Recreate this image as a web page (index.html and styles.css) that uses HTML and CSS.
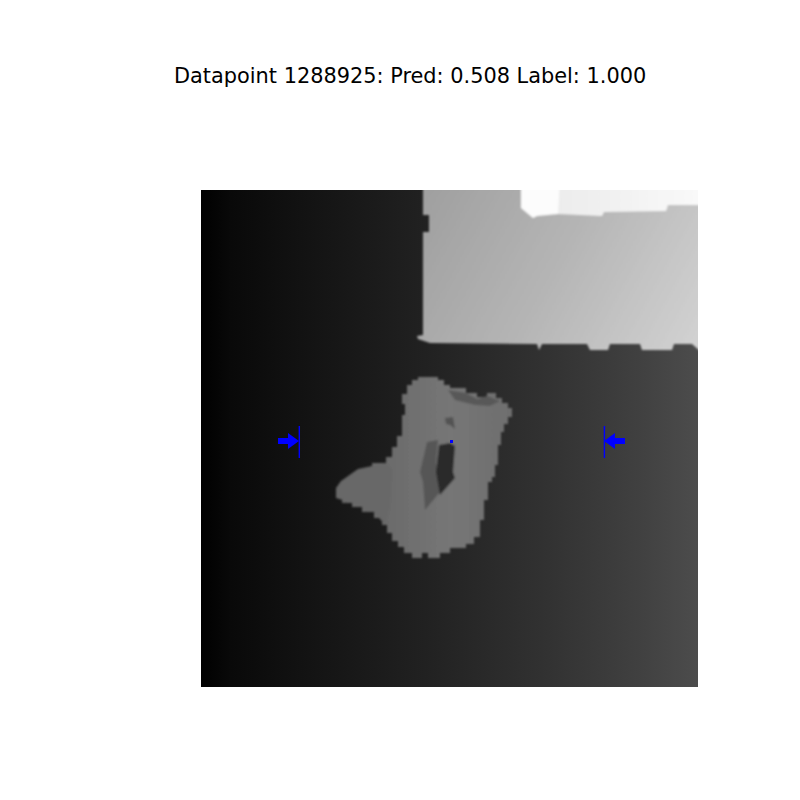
FILE: index.html
```html
<!DOCTYPE html>
<html lang="en">
<head>
<meta charset="utf-8">
<title>Datapoint 1288925</title>
<link rel="stylesheet" href="styles.css">
</head>
<body>
<main class="figure">
  <h1 class="title">Datapoint 1288925: Pred: 0.508 Label: 1.000</h1>
  <svg class="plot" width="497" height="497" viewBox="201 190 497 497" aria-label="Depth image with grasp markers">
    <defs>
      <linearGradient id="floor" gradientUnits="userSpaceOnUse" x1="201" y1="0" x2="697" y2="0">
        <stop offset="0" stop-color="#000"/>
        <stop offset="0.06" stop-color="#090909"/>
        <stop offset="0.2" stop-color="#121212"/>
        <stop offset="0.45" stop-color="#212121"/>
        <stop offset="0.7" stop-color="#323232"/>
        <stop offset="0.88" stop-color="#404040"/>
        <stop offset="1" stop-color="#4c4c4c"/>
      </linearGradient>
      <linearGradient id="panel" gradientUnits="userSpaceOnUse" x1="423" y1="200" x2="697" y2="350">
        <stop offset="0" stop-color="#a0a0a0"/>
        <stop offset="0.5" stop-color="#b6b6b6"/>
        <stop offset="1" stop-color="#d2d2d2"/>
      </linearGradient>
      <linearGradient id="glare" gradientUnits="userSpaceOnUse" x1="558" y1="0" x2="697" y2="0">
        <stop offset="0" stop-color="#ececec"/>
        <stop offset="1" stop-color="#f9f9f9"/>
      </linearGradient>
      <linearGradient id="bootShade" gradientUnits="userSpaceOnUse" x1="335" y1="0" x2="512" y2="0">
        <stop offset="0" stop-color="#646464"/>
        <stop offset="0.4" stop-color="#6e6e6e"/>
        <stop offset="0.65" stop-color="#767676"/>
        <stop offset="1" stop-color="#6e6e6e"/>
      </linearGradient>
      <filter id="soft" x="-5%" y="-5%" width="110%" height="110%">
        <feGaussianBlur stdDeviation="1"/>
      </filter>
      <clipPath id="frame"><rect x="201" y="190" width="497" height="497"/></clipPath>
    </defs>
    <rect class="floor" x="201" y="190" width="497" height="497"/>
    <g clip-path="url(#frame)">
      <g filter="url(#soft)">
        <polygon class="panel" points="423,180 423,215 429,215 429,232 423,232 423,335 417,336 418,339 430,343 537,344 539,350 542,344 587,344 590,350 608,350 610,344 640,344 642,350 672,350 674,344 692,344 700,351 710,351 710,180"/>
        <polygon class="glare" points="556,180 558,214 602,216 604,212 666,211 668,205 710,205 710,180"/>
        <polygon class="white" points="521,180 521,208 533,218 537,216 558,214 560,180"/>
        <polygon class="boot" points="418,377 438,377 438,380 444,380 444,385 450,385 450,388 466,388 466,393 477,393 477,397 487,397 487,393 496,393 496,398 502,398 502,403 508,403 508,408 512,408 512,417 508,417 508,424 504,424 504,432 501,432 501,445 498,445 498,465 495,465 495,477 492,477 492,482 488,482 488,500 484,500 484,520 480,520 480,537 474,537 474,544 466,544 466,548 450,548 450,553 440,553 440,558 428,558 428,553 422,553 422,558 412,558 412,553 404,553 404,547 398,547 398,541 392,541 392,533 387,533 387,525 382,525 382,518 374,518 374,512 362,512 362,507 352,507 352,503 342,503 342,498 336,498 336,488 341,488 341,481 350,481 350,475 358,475 358,469 372,469 372,463 386,463 386,457 392,457 392,447 397,447 397,436 402,436 402,415 405,415 405,404 402,404 402,394 407,394 407,385 412,385 412,380 418,380"/>
        <polygon class="foot" points="336,498 336,488 341,481 358,469 386,463 392,470 390,505 385,525 374,512 352,503"/>
        <polygon class="band" points="448,390 466,393 477,399 487,396 500,401 490,406 475,405 455,400"/>
        <polygon class="spot" points="445,418 453,417 455,429 450,425 446,424"/>
        <polygon class="inner" points="427,442 438,440 436,462 440,492 425,510 423,482 420,472"/>
        <polygon class="hole" points="439,445 450,443 455,446 453,472 455,478 440,495 436,472"/>
      </g>
      <g class="marker">
        <rect x="298.6" y="426" width="1.4" height="32"/>
        <polygon points="278,438 288,438 288,433 299,441 288,449 288,444 278,444"/>
        <rect x="603.7" y="426" width="1.4" height="32"/>
        <polygon points="625,438 615,438 615,433 604,441 615,449 615,444 625,444"/>
        <rect x="450" y="440" width="3" height="3"/>
      </g>
    </g>
  </svg>
</main>
</body>
</html>
```

FILE: styles.css
```css
html, body {
  margin: 0;
  background: #fff;
}

.figure {
  display: flex;
  flex-direction: column;
  width: 800px;
  height: 800px;
  overflow: hidden;
}

.title {
  margin: 0;
  padding: 64px 0 0 174px;
  height: 190px;
  box-sizing: border-box;
  font: 400 20.87px/24px "DejaVu Sans", sans-serif;
  color: #000;
  white-space: nowrap;
}

.plot {
  display: block;
  margin-left: 201px;
}

.floor { fill: url(#floor); }
.panel { fill: url(#panel); }
.glare { fill: url(#glare); }
.white { fill: #fcfcfc; }
.boot { fill: url(#bootShade); }
.foot { fill: #686868; }
.band { fill: #585858; }
.spot { fill: #535353; }
.inner { fill: #565656; }
.hole { fill: #2a2a2a; }
.marker { fill: #0000ff; }
```
